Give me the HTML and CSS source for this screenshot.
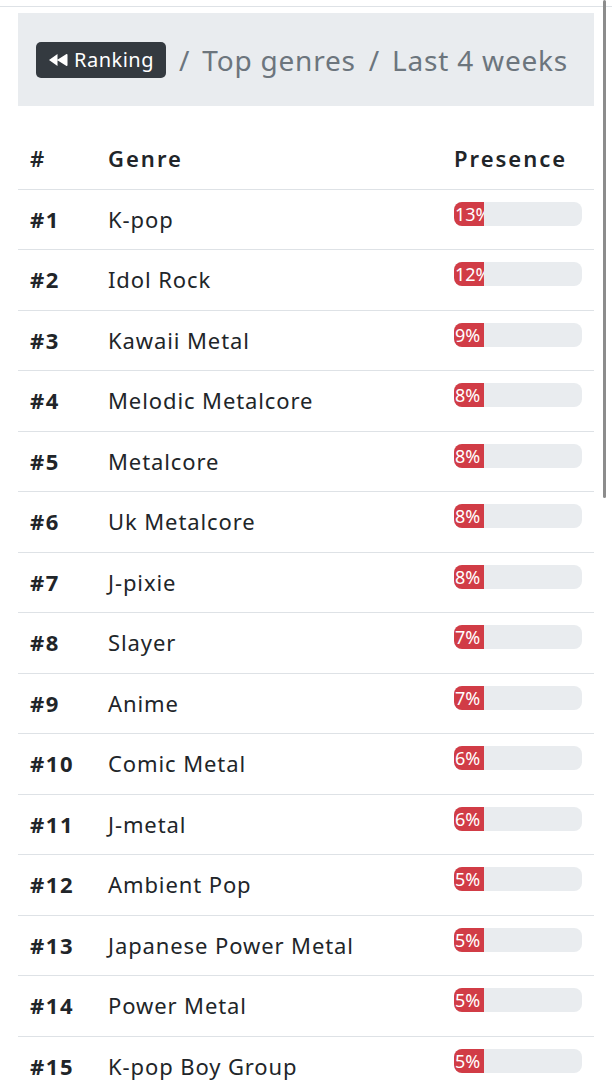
FILE: index.html
```html
<!DOCTYPE html>
<html lang="en">
	<head>
		<meta charset="utf-8">
		<title>Top genres - Last 4 weeks</title>
		<link rel="stylesheet" href="styles.css">
	</head>
	<body>
		<div class="topbar"></div>
		<div class="container">
			<div class="crumbs">
				<a class="btn-back" href="#">
					<svg class="icon" viewBox="0 0 20 14" width="20" height="14">
						<path d="M1 7 L9.5 1 L9.5 13 Z M9 7 L18.5 1 Q19.5 0.6 19.5 2 L19.5 12 Q19.5 13.4 18.5 13 Z" fill="#fff"/>
					</svg>Ranking</a>
				<span class="sep">/</span>
				<span class="item">Top genres</span>
				<span class="sep">/</span>
				<span class="item">Last 4 weeks</span>
			</div>

			<table class="ranking">
				<colgroup>
					<col class="c-rank">
					<col class="c-genre">
					<col class="c-presence">
				</colgroup>
				<thead>
					<tr>
						<th>#</th>
						<th>Genre</th>
						<th>Presence</th>
					</tr>
				</thead>
				<tbody>
					<tr><td class="rank">#1</td><td>K-pop</td><td><div class="progress"><div class="bar" style="width: 13%">13%</div></div></td></tr>
					<tr><td class="rank">#2</td><td>Idol Rock</td><td><div class="progress"><div class="bar" style="width: 12%">12%</div></div></td></tr>
					<tr><td class="rank">#3</td><td>Kawaii Metal</td><td><div class="progress"><div class="bar" style="width: 9%">9%</div></div></td></tr>
					<tr><td class="rank">#4</td><td>Melodic Metalcore</td><td><div class="progress"><div class="bar" style="width: 8%">8%</div></div></td></tr>
					<tr><td class="rank">#5</td><td>Metalcore</td><td><div class="progress"><div class="bar" style="width: 8%">8%</div></div></td></tr>
					<tr><td class="rank">#6</td><td>Uk Metalcore</td><td><div class="progress"><div class="bar" style="width: 8%">8%</div></div></td></tr>
					<tr><td class="rank">#7</td><td>J-pixie</td><td><div class="progress"><div class="bar" style="width: 8%">8%</div></div></td></tr>
					<tr><td class="rank">#8</td><td>Slayer</td><td><div class="progress"><div class="bar" style="width: 7%">7%</div></div></td></tr>
					<tr><td class="rank">#9</td><td>Anime</td><td><div class="progress"><div class="bar" style="width: 7%">7%</div></div></td></tr>
					<tr><td class="rank">#10</td><td>Comic Metal</td><td><div class="progress"><div class="bar" style="width: 6%">6%</div></div></td></tr>
					<tr><td class="rank">#11</td><td>J-metal</td><td><div class="progress"><div class="bar" style="width: 6%">6%</div></div></td></tr>
					<tr><td class="rank">#12</td><td>Ambient Pop</td><td><div class="progress"><div class="bar" style="width: 5%">5%</div></div></td></tr>
					<tr><td class="rank">#13</td><td>Japanese Power Metal</td><td><div class="progress"><div class="bar" style="width: 5%">5%</div></div></td></tr>
					<tr><td class="rank">#14</td><td>Power Metal</td><td><div class="progress"><div class="bar" style="width: 5%">5%</div></div></td></tr>
					<tr><td class="rank">#15</td><td>K-pop Boy Group</td><td><div class="progress"><div class="bar" style="width: 5%">5%</div></div></td></tr>
				</tbody>
			</table>
		</div>
		<div class="scroll-thumb"></div>
	</body>
</html>
```

FILE: styles.css
```css
* {
  margin: 0;
  padding: 0;
  box-sizing: border-box;
}

html {
  overflow: hidden;
}

body {
  font-family: "Noto Sans", "Open Sans", sans-serif;
  color: #212529;
  background-color: #fff;
}

.topbar {
  height: 7px;
  border-bottom: 1px solid #dee2e6;
}

.container {
  padding: 6px 18px 0;
}

/* breadcrumb */
.crumbs {
  display: flex;
  align-items: center;
  height: 93px;
  padding: 0 18px;
  background-color: #e9ecef;
  font-size: 28px;
  letter-spacing: 0.8px;
  color: #6c757d;
}

.btn-back {
  display: flex;
  align-items: center;
  height: 36px;
  padding: 0 12px;
  border-radius: 5px;
  background-color: #343a40;
  color: #fff;
  font-size: 20px;
  letter-spacing: 0.5px;
  text-decoration: none;
}

.btn-back .icon {
  margin-right: 6px;
}

.sep {
  padding: 0 12px 0 13px;
}

/* table */
.ranking {
  width: 100%;
  margin-top: 23px;
  border-collapse: collapse;
  table-layout: fixed;
  font-size: 22px;
  line-height: 33px;
  letter-spacing: 0.9px;
}

.c-rank {
  width: 78px;
}

.c-presence {
  width: 152px;
}

.ranking th,
.ranking td {
  padding: 13.25px 12px;
  text-align: left;
  vertical-align: top;
}

.ranking th {
  font-weight: 600;
  letter-spacing: 2px;
  border-bottom: 1px solid #dee2e6;
}

.ranking td {
  border-top: 1px solid #dee2e6;
}

.ranking tbody tr:first-child td {
  border-top: 0;
}

.ranking .rank {
  font-weight: 700;
  letter-spacing: 1.6px;
}

.progress {
  display: flex;
  height: 24px;
  margin-top: -1px;
  border-radius: 8px;
  background-color: #e9ecef;
  overflow: hidden;
}

.bar {
  min-width: 30px;
  padding-left: 1px;
  background-color: #d13c46;
  color: #fff;
  font-size: 18px;
  line-height: 24px;
  letter-spacing: 0;
  white-space: nowrap;
  overflow: hidden;
}

.scroll-thumb {
  position: fixed;
  top: 0;
  right: 6px;
  width: 3px;
  height: 498px;
  border-radius: 2px;
  background-color: #8c8c8c;
}
```
